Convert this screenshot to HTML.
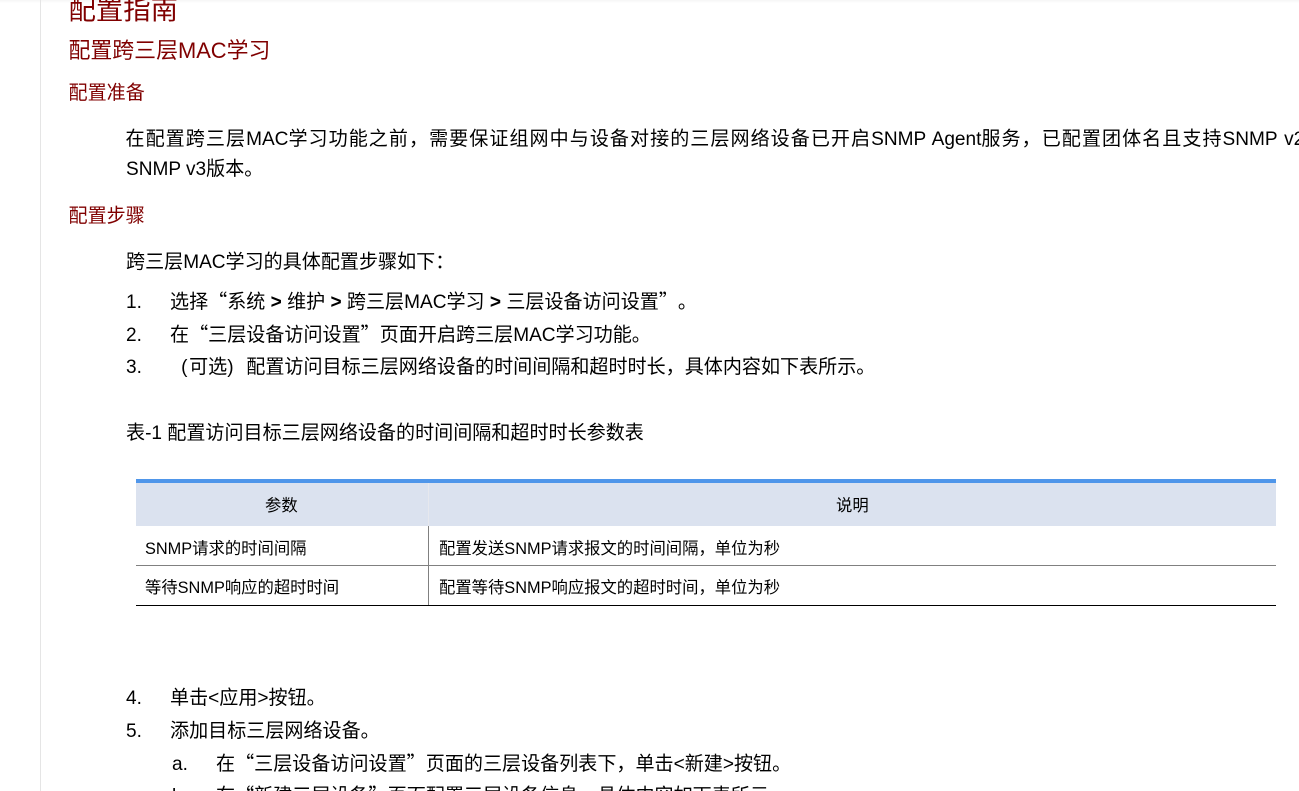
<!DOCTYPE html>
<html lang="zh"><head><meta charset="utf-8">
<style>
html,body{margin:0;padding:0;width:1299px;height:791px;overflow:hidden;background:#fff}
body{position:relative;font-family:"Liberation Sans","WenQuanYi Zen Hei","Noto Sans CJK SC",sans-serif;color:#000;text-spacing-trim:space-all}
.t{position:absolute;white-space:pre;line-height:1;font-size:19.07px}
.s{font-size:16.33px}
.r{color:#800000}
.b{position:absolute}
.l{letter-spacing:0;word-spacing:1.5px}
.q{font-family:"Noto Sans CJK SC",sans-serif;line-height:0;text-spacing-trim:space-all}
.g{font-weight:bold}
.pl,.pr{display:inline-block;width:19.07px;line-height:1}
.pl{text-align:right}
.pr{text-align:left}
</style></head><body>
<div class="b" style="left:0;top:0;width:1299px;height:3px;background:linear-gradient(#f6f6f6,#fff)"></div>
<div class="b" style="left:40px;top:0;width:1px;height:791px;background:#e5e5e5"></div>
<div class="t r" style="left:68.5px;top:-4px;font-size:27.4px">配置指南</div>
<div class="t r" style="left:68.5px;top:40px;font-size:21.9px">配置跨三层MAC学习</div>
<div class="t r" style="left:68.5px;top:84px">配置准备</div>
<div class="t" style="left:125.5px;top:130px;letter-spacing:1.03px">在配置跨三层<span class="l">MAC</span>学习功能之前，需要保证组网中与设备对接的三层网络设备已开启<span class="l">SNMP Agent</span>服务，已配置团体名且支持<span class="l">SNMP v2c</span>或</div>
<div class="t" style="left:126px;top:160px">SNMP v3版本。</div>
<div class="t r" style="left:68.5px;top:207px">配置步骤</div>
<div class="t" style="left:126px;top:253px">跨三层MAC学习的具体配置步骤如下：</div>
<div class="t" style="left:126px;top:293px">1.</div>
<div class="t" style="left:170px;top:293px">选择<span class="q">“</span>系统 <span class="g">&gt;</span> 维护 <span class="g">&gt;</span> 跨三层MAC学习 <span class="g">&gt;</span> 三层设备访问设置<span class="q">”</span>。</div>
<div class="t" style="left:126px;top:326px">2.</div>
<div class="t" style="left:170px;top:326px">在<span class="q">“</span>三层设备访问设置<span class="q">”</span>页面开启跨三层MAC学习功能。</div>
<div class="t" style="left:126px;top:358px">3.</div>
<div class="t" style="left:170px;top:358px"><span class="pl">(&#8202;</span>可选<span class="pr">)</span>配置访问目标三层网络设备的时间间隔和超时时长，具体内容如下表所示。</div>
<div class="t" style="left:126px;top:424px">表-1 配置访问目标三层网络设备的时间间隔和超时时长参数表</div>
<div class="b" style="left:136px;top:479px;width:1140px;height:4px;background:#4f96ea"></div>
<div class="b" style="left:136px;top:483px;width:1140px;height:43px;background:#dbe2ef"></div>
<div class="b" style="left:428px;top:483px;width:1px;height:43px;background:#e6e8ee"></div>
<div class="b" style="left:428px;top:526px;width:1px;height:80px;background:#808080"></div>
<div class="b" style="left:136px;top:565px;width:1140px;height:1px;background:#808080"></div>
<div class="b" style="left:136px;top:605px;width:1140px;height:1px;background:#000"></div>
<div class="t s" style="left:265px;top:498px">参数</div>
<div class="t s" style="left:836px;top:498px">说明</div>
<div class="t s" style="left:145px;top:541px">SNMP请求的时间间隔</div>
<div class="t s" style="left:439px;top:541px">配置发送SNMP请求报文的时间间隔，单位为秒</div>
<div class="t s" style="left:145px;top:580px">等待SNMP响应的超时时间</div>
<div class="t s" style="left:439px;top:580px">配置等待SNMP响应报文的超时时间，单位为秒</div>
<div class="t" style="left:126px;top:689px">4.</div>
<div class="t" style="left:170px;top:689px">单击&lt;应用&gt;按钮。</div>
<div class="t" style="left:126px;top:722px">5.</div>
<div class="t" style="left:170px;top:722px">添加目标三层网络设备。</div>
<div class="t" style="left:172px;top:755px">a.</div>
<div class="t" style="left:216px;top:755px">在<span class="q">“</span>三层设备访问设置<span class="q">”</span>页面的三层设备列表下，单击&lt;新建&gt;按钮。</div>
<div class="t" style="left:172px;top:787px">b.</div>
<div class="t" style="left:216px;top:787px">在<span class="q">“</span>新建三层设备<span class="q">”</span>页面配置三层设备信息，具体内容如下表所示。</div>
</body></html>
